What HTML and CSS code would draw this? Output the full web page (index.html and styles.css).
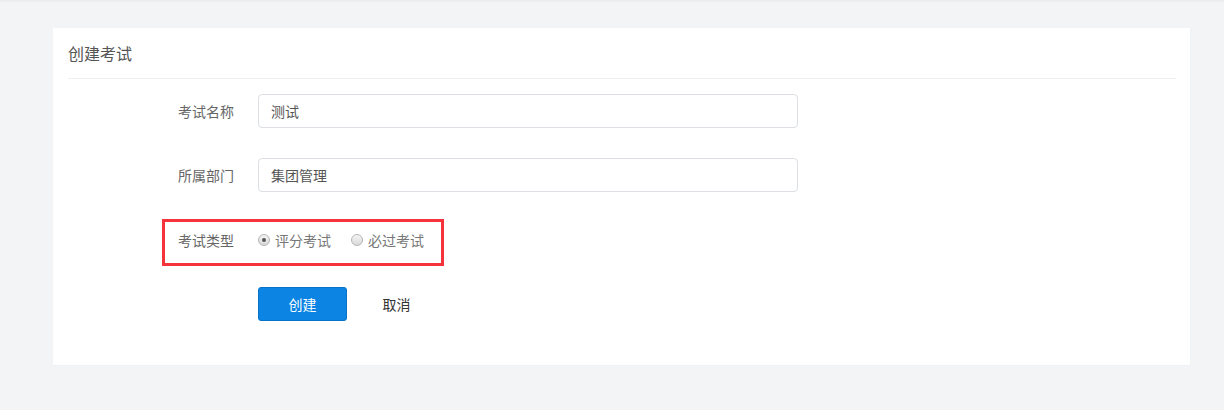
FILE: index.html
```html
<!DOCTYPE html>
<html lang="zh-CN">
<head>
<meta charset="utf-8">
<title>创建考试</title>
<link rel="stylesheet" href="styles.css">
</head>
<body>
<div class="topshade"></div>
<div class="page">
  <div class="card">
    <div class="card-header">创建考试</div>
    <form class="form">
      <div class="row">
        <label class="label">考试名称</label>
        <div class="input">测试</div>
      </div>
      <div class="row">
        <label class="label">所属部门</label>
        <div class="input">集团管理</div>
      </div>
      <div class="row row-mark">
        <label class="label">考试类型</label>
        <div class="radios">
          <span class="radio"><span class="dot checked"></span>评分考试</span>
          <span class="radio"><span class="dot"></span>必过考试</span>
        </div>
      </div>
      <div class="row actions">
        <button type="button" class="btn-primary">创建</button>
        <button type="button" class="btn-text">取消</button>
      </div>
    </form>
  </div>
</div>
</body>
</html>
```

FILE: styles.css
```css
* { box-sizing: border-box; }
html, body {
  margin: 0;
  padding: 0;
  background: #f3f4f6;
  font-family: "Noto Sans CJK SC", "Noto Sans", sans-serif;
  height: 410px;
  overflow: hidden;
}
.topshade {
  height: 3px;
  background: linear-gradient(#e9eaec, #f3f4f6);
}
.page {
  padding: 25px 33px 0 53px;
}
.card {
  background: #ffffff;
  border: 1px solid #eef1f6;
  border-top: none;
  border-left: none;
  height: 338px;
  padding: 0 14px 0 15px;
}
.card-header {
  padding-top: 13px;
  height: 51px;
  line-height: 24px;
  font-size: 16px;
  color: #555;
  border-bottom: 1px solid #eeeff2;
}
.form {
  padding-top: 15px;
  padding-left: 100px;
}
.row {
  display: flex;
  align-items: center;
  height: 34px;
  margin-bottom: 30px;
}
.label {
  width: 90px;
  padding-right: 24px;
  text-align: right;
  font-size: 14px;
  color: #666;
  flex: none;
  white-space: nowrap;
}
.input {
  width: 540px;
  height: 34px;
  border: 1px solid #dcdfe3;
  border-radius: 4px;
  padding: 0 12px;
  line-height: 32px;
  font-size: 14px;
  color: #555;
}
.row-mark {
  width: 282px;
  height: 47px;
  margin-left: -6px;
  margin-top: -3px;
  margin-bottom: 21px;
  padding: 1px 0 6px 3px;
  border: 3px solid #f5333a;
}
.radios {
  display: flex;
  align-items: center;
  font-size: 14px;
  color: #777;
  flex: none;
  white-space: nowrap;
}
.radio {
  display: inline-flex;
  align-items: center;
  margin-right: 20px;
  flex: none;
}
.dot {
  width: 12px;
  height: 12px;
  border-radius: 50%;
  border: 1px solid #b5b5b5;
  background: linear-gradient(#f4f4f4, #d9d9d9);
  margin-right: 5px;
  display: inline-flex;
  align-items: center;
  justify-content: center;
  flex: none;
}
.dot.checked::after {
  content: "";
  width: 4px;
  height: 4px;
  border-radius: 50%;
  background: #555;
}
.actions {
  margin-left: 90px;
}
.btn-primary {
  width: 89px;
  height: 34px;
  background: #0b84e3;
  border: 1px solid #0a72c6;
  border-radius: 3px;
  color: #fff;
  font-size: 14px;
  font-family: inherit;
  padding: 0;
}
.btn-text {
  margin-left: 10px;
  width: 79px;
  height: 34px;
  background: none;
  border: none;
  color: #333;
  font-size: 14px;
  font-family: inherit;
  padding: 0;
}
```
